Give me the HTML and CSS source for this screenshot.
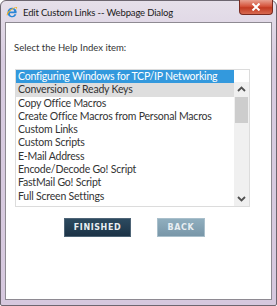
FILE: index.html
```html
<!DOCTYPE html>
<html>
<head>
<meta charset="utf-8">
<link rel="stylesheet" href="styles.css">
</head>
<body>
<div class="window">
  <div class="titlebar">
    <svg class="ie-icon" width="12" height="12" viewBox="0 0 12 12">
      <path d="M1.5 6.5 A4.6 4.6 0 1 1 10.6 7.2 L4 7.2 A2.2 2.2 0 0 0 8.3 8.3 L10.4 8.3 A4.6 4.6 0 0 1 1.5 6.5 Z M4 5.4 L8.2 5.4 A2.1 2.1 0 0 0 4 5.4 Z" fill="#2b86d6"/>
      <path d="M0.8 9.5 C0 6 6 1.5 11 1 C11.5 2 10.5 3.5 9.6 4.2 C10.6 2.8 10.6 1.8 10 1.8 C7 2.2 2 6.5 1.6 9.2 Z" fill="#f2b01e"/>
    </svg>
    <span class="title">Edit Custom Links -- Webpage Dialog</span>
    <div class="close">
      <svg width="10" height="8" viewBox="0 0 10 8">
        <path d="M1.5 0.5 L8.5 7.5 M8.5 0.5 L1.5 7.5" stroke="#fff" stroke-width="2"/>
      </svg>
    </div>
  </div>
  <div class="content">
    <div class="label">Select the Help Index item:</div>
    <div class="listbox">
      <ul class="items">
        <li class="selected">Configuring Windows for TCP/IP Networking</li>
        <li class="hover">Conversion of Ready Keys</li>
        <li>Copy Office Macros</li>
        <li>Create Office Macros from Personal Macros</li>
        <li>Custom Links</li>
        <li>Custom Scripts</li>
        <li>E-Mail Address</li>
        <li>Encode/Decode Go! Script</li>
        <li>FastMail Go! Script</li>
        <li>Full Screen Settings</li>
      </ul>
      <div class="scrollbar">
        <div class="sb-top"></div>
        <div class="sb-btn">
          <svg width="9" height="6" viewBox="0 0 9 6"><path d="M1 5 L4.5 1.5 L8 5" fill="none" stroke="#505050" stroke-width="1.8"/></svg>
        </div>
        <div class="sb-track">
          <div class="sb-thumb"></div>
        </div>
        <div class="sb-btn">
          <svg width="9" height="6" viewBox="0 0 9 6"><path d="M1 1 L4.5 4.5 L8 1" fill="none" stroke="#505050" stroke-width="1.8"/></svg>
        </div>
      </div>
    </div>
    <div class="buttons">
      <div class="btn finished">FINISHED</div>
      <div class="btn back">BACK</div>
    </div>
  </div>
</div>
</body>
</html>
```
FILE: styles.css
```css
html, body {
  margin: 0;
  padding: 0;
  background: #ffffff;
}
.window {
  width: 277px;
  height: 306px;
  box-sizing: border-box;
  border: 1px solid #6d6670;
  border-radius: 6px 6px 2px 2px;
  background: linear-gradient(#e6e0ea, #d8cce0 60px, #d6c8de);
  padding: 0 4px 5px 4px;
  display: flex;
  flex-direction: column;
  font-family: Lato, "Open Sans", sans-serif;
}
.titlebar {
  height: 21px;
  display: flex;
  align-items: center;
  position: relative;
}
.ie-icon {
  margin-left: 1px;
  margin-right: 5px;
  margin-top: 1px;
}
.title {
  font-size: 9.5px;
  color: #1a1a1a;
  margin-top: 1px;
  letter-spacing: -0.15px;
}
.close {
  position: absolute;
  right: -0.5px;
  top: -1px;
  width: 34px;
  height: 15px;
  box-sizing: border-box;
  border: 1px solid #7a2a20;
  border-top: none;
  border-radius: 0 0 4px 4px;
  background: linear-gradient(#e8a090, #d5543c 45%, #c23a22 55%, #d86a50);
  display: flex;
  align-items: center;
  justify-content: center;
}
.content {
  flex: 1;
  background: #ffffff;
  border: 1px solid #8e8a92;
  display: flex;
  flex-direction: column;
  padding-left: 8px;
}
.label {
  margin-top: 18px;
  font-size: 9.5px;
  color: #333;
  line-height: 14px;
}
.listbox {
  margin-top: 14px;
  margin-left: 1px;
  width: 235px;
  height: 138px;
  box-sizing: border-box;
  border: 1px solid #dcdcdc;
  display: flex;
}
.items {
  list-style: none;
  margin: 0;
  padding: 0;
  flex: 1;
  font-size: 10.5px;
  color: #333;
  letter-spacing: -0.2px;
}
.items li {
  height: 13.3px;
  line-height: 13.3px;
  padding-left: 2px;
  white-space: nowrap;
}
.items li.selected {
  background: #3399dd;
  color: #ffffff;
}
.items li.hover {
  background: #dedede;
}
.scrollbar {
  width: 15px;
  display: flex;
  flex-direction: column;
  background: #f0f0f0;
}
.sb-top {
  height: 12px;
  background: #ffffff;
}
.sb-btn {
  height: 14px;
  display: flex;
  align-items: center;
  justify-content: center;
}
.sb-track {
  flex: 1;
  padding: 1px 1px 0 1px;
}
.sb-thumb {
  height: 26px;
  background: #cdcdcd;
}
.buttons {
  margin-top: 11px;
  display: flex;
  gap: 26px;
  padding-left: 50px;
}
.btn {
  height: 19px;
  box-sizing: border-box;
  display: flex;
  align-items: center;
  justify-content: center;
  font-family: "DejaVu Sans", sans-serif;
  font-weight: bold;
  font-size: 8px;
  letter-spacing: 0.6px;
  color: #e8eef2;
}
.finished {
  width: 67px;
  background: linear-gradient(#2c4a60, #1c3346);
  border: 1px solid #4e6476;
}
.back {
  width: 48px;
  background: linear-gradient(#90aebe, #7896a8);
  border: 1px solid #a9bfcb;
}
```
